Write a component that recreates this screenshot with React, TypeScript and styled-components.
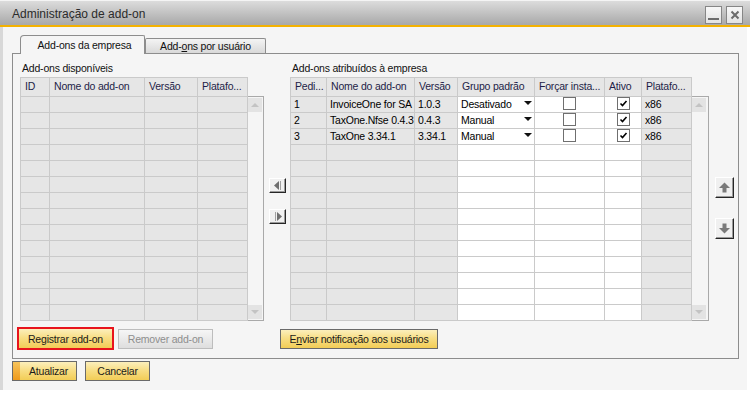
import React from 'react';
import styled, { createGlobalStyle, css } from 'styled-components';

const GlobalStyle = createGlobalStyle`
  html, body { margin: 0; padding: 0; background: #ffffff; }
  body { font-family: "Liberation Sans", Arial, sans-serif; }
  * { box-sizing: border-box; }
`;

const FONT = css`
  font-family: "Liberation Sans", Arial, sans-serif;
  font-size: 10.5px;
  letter-spacing: -0.2px;
`;

const Window = styled.div`
  width: 750px;
  height: 393px;
  background: #ffffff;
  display: flex;
  flex-direction: column;
  overflow: hidden;
`;

const TitleBar = styled.div`
  height: 25px;
  flex: none;
  display: flex;
  align-items: center;
  justify-content: space-between;
  padding: 1px 7px 0 12px;
  border-top: 1px solid #f4f4f4;
  background: linear-gradient(#dcdcdc, #a8a8a8);
`;

const Title = styled.div`
  font-size: 12px;
  color: #2b2b2b;
`;

const WinButtons = styled.div`
  display: flex;
  gap: 4px;
  align-self: flex-start;
  margin-top: 4px;
`;

const WinButton = styled.div`
  width: 17px;
  height: 18px;
  border: 1px solid #868686;
  background: linear-gradient(#f8f8f8, #e2e2e2);
  display: flex;
  align-items: center;
  justify-content: center;
`;

const Accent = styled.div`
  height: 2px;
  flex: none;
  background: #f3b100;
`;

const Body = styled.div`
  width: 747px;
  height: 363px;
  flex: none;
  background: #f5f5f5;
  border-left: 3px solid #d8d8d8;
  padding: 8px 0 0 9px;
  display: flex;
  flex-direction: column;
`;

const TabRow = styled.div`
  height: 18px;
  margin-left: 8px;
  display: flex;
  align-items: flex-end;
`;

const ActiveTab = styled.div`
  ${FONT};
  position: relative;
  z-index: 1;
  width: 125px;
  height: 19px;
  margin-bottom: -1px;
  border: 1px solid #8d8d8d;
  border-bottom: none;
  border-radius: 4px 2px 0 0;
  background: #f5f5f5;
  color: #111;
  display: flex;
  align-items: center;
  justify-content: center;
  padding: 0 0 1px 4px;
`;

const Tab = styled.div`
  ${FONT};
  width: 121px;
  height: 15px;
  border: 1px solid #8d8d8d;
  border-bottom: none;
  border-radius: 2px 2px 0 0;
  background: linear-gradient(#f4f4f4, #d9d9d9);
  color: #111;
  display: flex;
  align-items: center;
  justify-content: center;
`;

const Panel = styled.div`
  width: 727px;
  height: 306px;
  border: 1px solid #8d8d8d;
  background: #f5f5f5;
  padding-top: 8px;
  display: flex;
  flex-direction: column;
`;

const PanelMain = styled.div`
  display: flex;
  align-items: flex-start;
  padding-left: 7px;
`;

const Section = styled.div<{ $w: number }>`
  width: ${(p) => p.$w}px;
  flex: none;
  display: flex;
  flex-direction: column;
`;

const Label = styled.div`
  ${FONT};
  height: 15px;
  padding-left: 2px;
  color: #111;
  line-height: 13px;
`;

const HeaderRow = styled.div`
  display: flex;
  border-top: 1px solid #cacaca;
  border-left: 1px solid #cacaca;
  align-self: flex-start;
`;

const HeaderCell = styled.div<{ $w: number }>`
  ${FONT};
  width: ${(p) => p.$w}px;
  height: 19px;
  border-right: 1px solid #cacaca;
  border-bottom: 1px solid #cacaca;
  background: #e6e6e6;
  color: #1e1e48;
  padding-left: 4px;
  line-height: 17px;
  white-space: nowrap;
  overflow: hidden;
`;

const BodyRow = styled.div`
  display: flex;
`;

const Rows = styled.div`
  display: flex;
  flex-direction: column;
  border-left: 1px solid #cacaca;
`;

const Row = styled.div`
  display: flex;
`;

const Cell = styled.div<{ $w: number; $white?: boolean; $center?: boolean }>`
  ${FONT};
  width: ${(p) => p.$w}px;
  height: 16px;
  flex: none;
  border-right: 1px solid #cacaca;
  border-bottom: 1px solid #cacaca;
  background: ${(p) => (p.$white ? '#ffffff' : '#e6e6e6')};
  color: #000;
  padding-left: 3px;
  line-height: 15px;
  white-space: nowrap;
  overflow: hidden;
  display: flex;
  align-items: ${(p) => (p.$center ? 'center' : 'flex-start')};
  justify-content: ${(p) => (p.$center ? 'center' : 'space-between')};
  ${(p) => p.$center && 'padding: 0 0 2px 0;'}
`;

const Track = styled.div<{ $w: number }>`
  width: ${(p) => p.$w}px;
  height: 225px;
  margin-top: -1px;
  border: 1px solid #a9a9a9;
  border-left: none;
  display: flex;
  flex-direction: column;
  justify-content: space-between;
  padding: 1px 1px 1px 0;
`;

const ScrollBtn = styled.div`
  width: 14px;
  height: 14px;
  background: #e3e3e3;
  display: flex;
  align-items: center;
  justify-content: center;
`;

const MidCol = styled.div`
  width: 26px;
  flex: none;
  padding: 116px 0 0 5px;
  display: flex;
  flex-direction: column;
  gap: 16px;
`;

const SideCol = styled.div`
  width: 29px;
  flex: none;
  padding: 115px 0 0 6px;
  display: flex;
  flex-direction: column;
  gap: 20px;
`;

const bevel = css`
  background: #f0f0f0;
  border-top: 1px solid #ffffff;
  border-left: 1px solid #ffffff;
  border-right: 1px solid #262626;
  border-bottom: 1px solid #262626;
  box-shadow: inset -1px -1px 0 #9a9a9a;
  display: flex;
  align-items: center;
  justify-content: center;
`;

const ArrowBtn = styled.div`
  ${bevel};
  width: 17px;
  height: 15px;
`;

const MoveBtn = styled.div`
  ${bevel};
  width: 19px;
  height: 21px;
`;

const PanelButtons = styled.div`
  display: flex;
  align-items: center;
  height: 23px;
  margin-top: 6px;
  padding-left: 4px;
`;

const LeftButtons = styled.div`
  width: 263px;
  display: flex;
  align-items: center;
  gap: 4px;
`;

const Button = styled.div<{ $w: number; $disabled?: boolean; $focus?: boolean; $stripe?: boolean }>`
  ${FONT};
  position: relative;
  width: ${(p) => p.$w}px;
  height: ${(p) => (p.$focus ? 23 : 20)}px;
  border: ${(p) => (p.$focus ? '2px solid #e8141c' : p.$disabled ? '1px solid #bdbdbd' : '1px solid #6a6a6a')};
  background: ${(p) =>
    p.$disabled
      ? 'linear-gradient(#f6f6f6, #dedede)'
      : 'linear-gradient(#fcefbc 0%, #f8de86 45%, #f2cd56 100%)'};
  color: ${(p) => (p.$disabled ? '#8e8e8e' : '#1a1a1a')};
  display: flex;
  align-items: center;
  justify-content: center;
  padding-left: ${(p) => (p.$stripe ? 8 : 0)}px;
  white-space: nowrap;
  ${(p) =>
    p.$stripe &&
    css`
      &::before {
        content: '';
        position: absolute;
        left: 0;
        top: 0;
        bottom: 0;
        width: 7px;
        background: linear-gradient(#f7c45c, #ef9a1c);
      }
    `}
`;

const Footer = styled.div`
  display: flex;
  gap: 8px;
  margin-top: 2px;
`;

const Box = styled.div`
  width: 13px;
  height: 13px;
  border: 1px solid #6f6f6f;
  background: #fff;
  display: flex;
  align-items: center;
  justify-content: center;
`;

const Caret = () => (
  <svg width="8" height="4" viewBox="0 0 8 4" style={{ marginTop: 4, marginRight: 2, flex: 'none' }}>
    <polygon points="0,0 8,0 4,4" fill="#111" />
  </svg>
);

const CheckBox = ({ checked }: { checked?: boolean }) => (
  <Box>
    {checked && (
      <svg width="9" height="9" viewBox="0 0 9 9">
        <polyline points="1.5,4.5 3.5,6.5 7.5,2" fill="none" stroke="#000" strokeWidth="1.6" />
      </svg>
    )}
  </Box>
);

const UpTri = ({ c = '#c3c3c3' }: { c?: string }) => (
  <svg width="8" height="4" viewBox="0 0 8 4">
    <polygon points="0,4 8,4 4,0" fill={c} />
  </svg>
);
const DownTri = ({ c = '#c3c3c3' }: { c?: string }) => (
  <svg width="8" height="4" viewBox="0 0 8 4">
    <polygon points="0,0 8,0 4,4" fill={c} />
  </svg>
);

const LeftIcon = () => (
  <svg width="8" height="9" viewBox="0 0 8 9">
    <polygon points="0,4.5 5,0 5,9" fill="#6e6e6e" />
    <rect x="6" y="0" width="1" height="9" fill="#a0a0a0" />
  </svg>
);
const RightIcon = () => (
  <svg width="8" height="9" viewBox="0 0 8 9">
    <rect x="1" y="0" width="1" height="9" fill="#a0a0a0" />
    <polygon points="8,4.5 3,0 3,9" fill="#6e6e6e" />
  </svg>
);
const UpArrow = () => (
  <svg width="11" height="11" viewBox="0 0 11 11">
    <polygon points="0,6 5.5,0.5 11,6" fill="#7a7a7a" />
    <rect x="3.5" y="5.5" width="4" height="5" fill="#7a7a7a" />
  </svg>
);
const DownArrow = () => (
  <svg width="11" height="11" viewBox="0 0 11 11">
    <rect x="3.5" y="0.5" width="4" height="5" fill="#7a7a7a" />
    <polygon points="0,5 5.5,10.5 11,5" fill="#7a7a7a" />
  </svg>
);

const leftCols = [
  { label: 'ID', w: 29 },
  { label: 'Nome do add-on', w: 95 },
  { label: 'Versão', w: 53 },
  { label: 'Platafo...', w: 50 },
];

const rightCols = [
  { label: 'Pedi...', w: 36 },
  { label: 'Nome do add-on', w: 88 },
  { label: 'Versão', w: 43 },
  { label: 'Grupo padrão', w: 77 },
  { label: 'Forçar insta...', w: 70 },
  { label: 'Ativo', w: 37 },
  { label: 'Platafo...', w: 50 },
];

const addons = [
  { n: '1', name: 'InvoiceOne for SA', ver: '1.0.3', grupo: 'Desativado' },
  { n: '2', name: 'TaxOne.Nfse 0.4.3', ver: '0.4.3', grupo: 'Manual' },
  { n: '3', name: 'TaxOne 3.34.1', ver: '3.34.1', grupo: 'Manual' },
];

const ROWS = 14;

export default function App() {
  const w = rightCols.map((c) => c.w);
  return (
    <>
      <GlobalStyle />
      <Window>
        <TitleBar>
          <Title>Administração de add-on</Title>
          <WinButtons>
            <WinButton>
              <svg width="11" height="12" viewBox="0 0 11 12">
                <rect x="0" y="9" width="11" height="2" fill="#6c6c6c" />
              </svg>
            </WinButton>
            <WinButton>
              <svg width="10" height="10" viewBox="0 0 10 10">
                <path d="M1.5 1.5 L8.5 8.5 M8.5 1.5 L1.5 8.5" stroke="#6c6c6c" strokeWidth="2" />
              </svg>
            </WinButton>
          </WinButtons>
        </TitleBar>
        <Accent />
        <Body>
          <TabRow>
            <ActiveTab>Add-ons da empresa</ActiveTab>
            <Tab>
              <span>
                Add-<u>o</u>ns por usuário
              </span>
            </Tab>
          </TabRow>
          <Panel>
            <PanelMain>
              <Section $w={244}>
                <Label>Add-ons disponíveis</Label>
                <HeaderRow>
                  {leftCols.map((c) => (
                    <HeaderCell key={c.label} $w={c.w}>
                      {c.label}
                    </HeaderCell>
                  ))}
                </HeaderRow>
                <BodyRow>
                  <Rows>
                    {Array.from({ length: ROWS }).map((_, i) => (
                      <Row key={i}>
                        {leftCols.map((c) => (
                          <Cell key={c.label} $w={c.w} />
                        ))}
                      </Row>
                    ))}
                  </Rows>
                  <Track $w={16}>
                    <ScrollBtn>
                      <UpTri />
                    </ScrollBtn>
                    <ScrollBtn>
                      <DownTri />
                    </ScrollBtn>
                  </Track>
                </BodyRow>
              </Section>
              <MidCol>
                <ArrowBtn>
                  <LeftIcon />
                </ArrowBtn>
                <ArrowBtn>
                  <RightIcon />
                </ArrowBtn>
              </MidCol>
              <Section $w={419}>
                <Label>Add-ons atribuídos à empresa</Label>
                <HeaderRow>
                  {rightCols.map((c) => (
                    <HeaderCell key={c.label + c.w} $w={c.w}>
                      {c.label}
                    </HeaderCell>
                  ))}
                </HeaderRow>
                <BodyRow>
                  <Rows>
                    {Array.from({ length: ROWS }).map((_, i) => {
                      const a = addons[i];
                      return (
                        <Row key={i}>
                          <Cell $w={w[0]}>{a?.n}</Cell>
                          <Cell $w={w[1]}>{a?.name}</Cell>
                          <Cell $w={w[2]}>{a?.ver}</Cell>
                          <Cell $w={w[3]} $white>
                            {a && (
                              <>
                                <span>{a.grupo}</span>
                                <Caret />
                              </>
                            )}
                          </Cell>
                          <Cell $w={w[4]} $white $center>
                            {a && <CheckBox />}
                          </Cell>
                          <Cell $w={w[5]} $white $center>
                            {a && <CheckBox checked />}
                          </Cell>
                          <Cell $w={w[6]}>{a && 'x86'}</Cell>
                        </Row>
                      );
                    })}
                  </Rows>
                  <Track $w={17}>
                    <ScrollBtn>
                      <UpTri />
                    </ScrollBtn>
                    <ScrollBtn>
                      <DownTri />
                    </ScrollBtn>
                  </Track>
                </BodyRow>
              </Section>
              <SideCol>
                <MoveBtn>
                  <UpArrow />
                </MoveBtn>
                <MoveBtn>
                  <DownArrow />
                </MoveBtn>
              </SideCol>
            </PanelMain>
            <PanelButtons>
              <LeftButtons>
                <Button $w={97} $focus>
                  Registrar add-on
                </Button>
                <Button $w={95} $disabled>
                  Remover add-on
                </Button>
              </LeftButtons>
              <Button $w={158}>
                <span>
                  E<u>n</u>viar notificação aos usuários
                </span>
              </Button>
            </PanelButtons>
          </Panel>
          <Footer>
            <Button $w={65} $stripe>
              Atualizar
            </Button>
            <Button $w={65}>Cancelar</Button>
          </Footer>
        </Body>
      </Window>
    </>
  );
}
